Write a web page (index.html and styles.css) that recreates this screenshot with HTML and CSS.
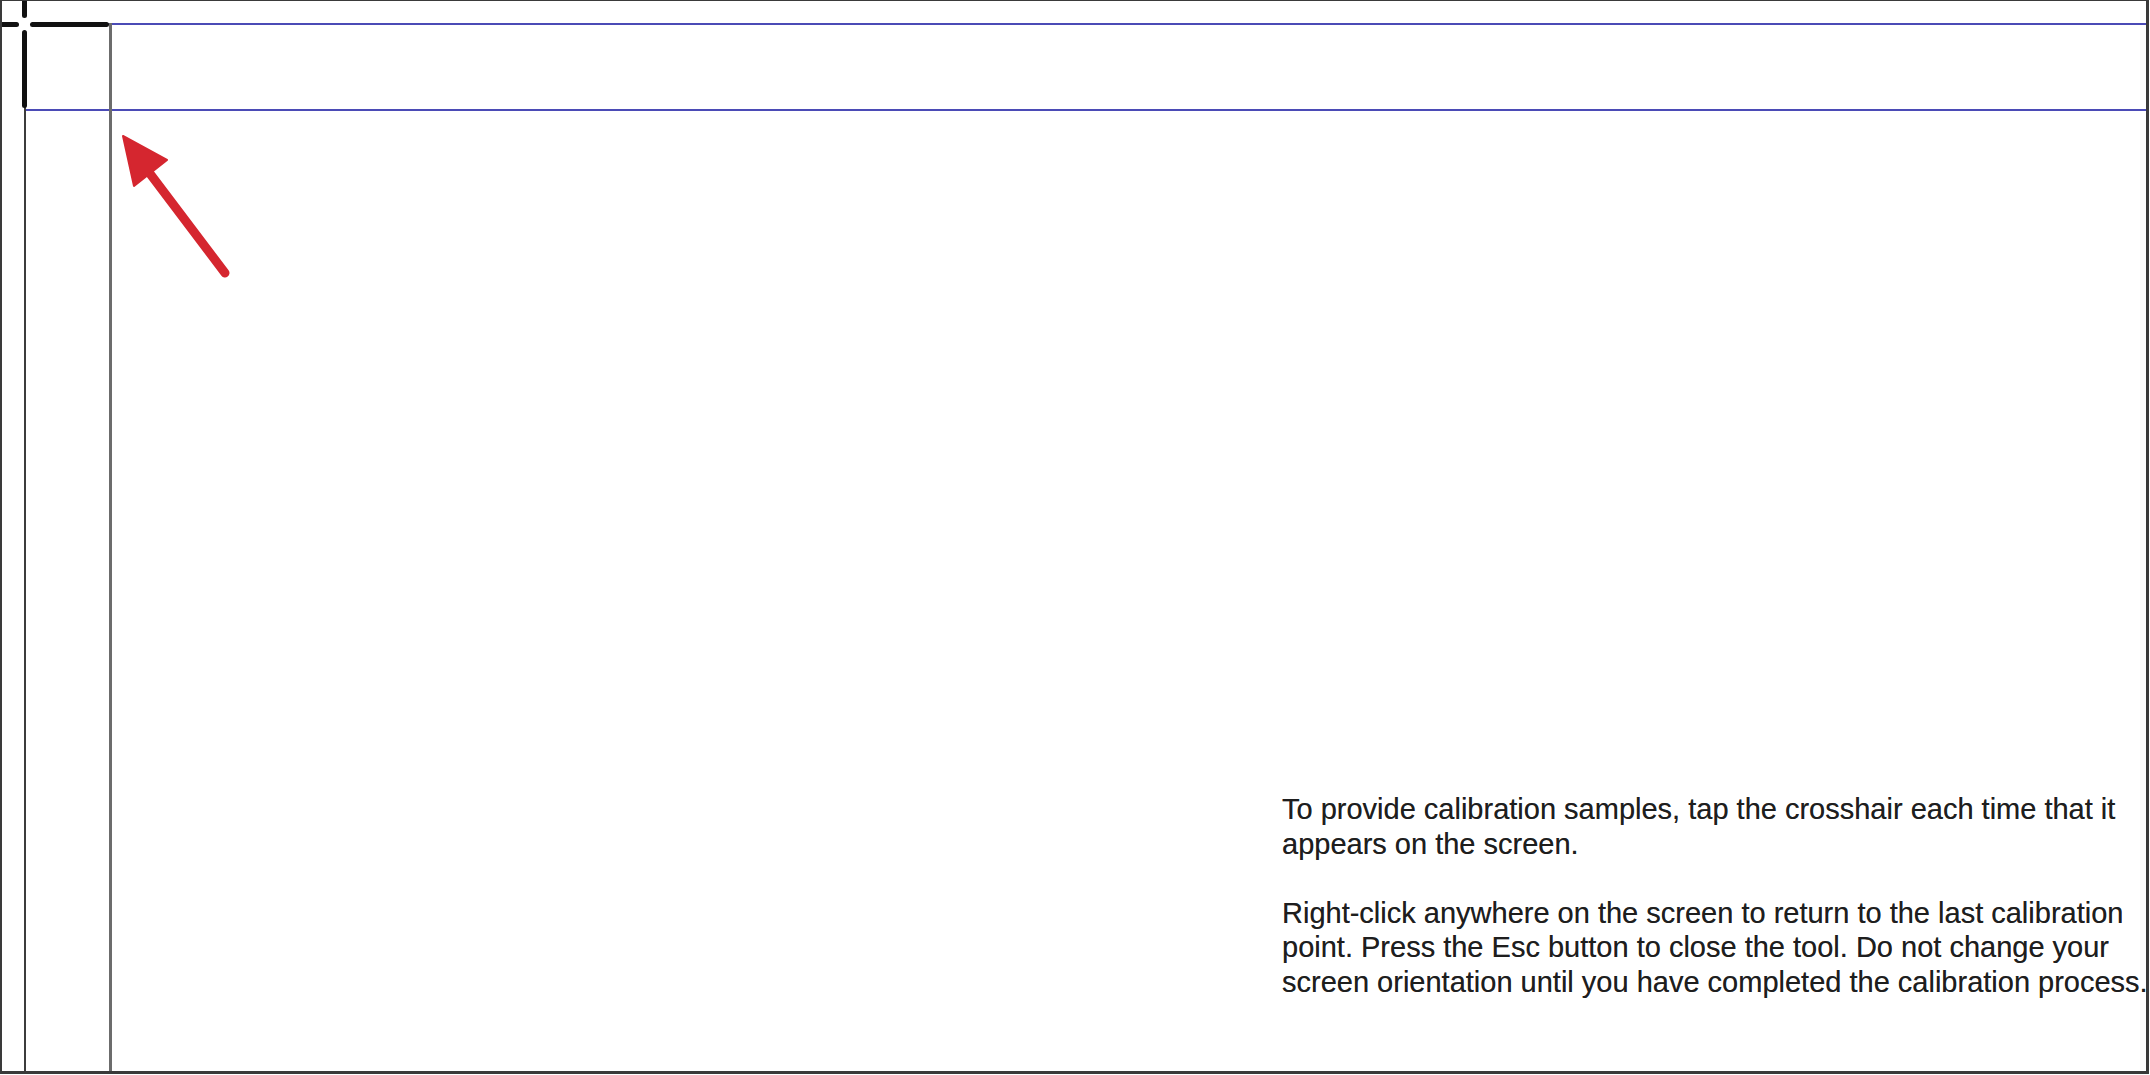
FILE: index.html
```html
<!DOCTYPE html>
<html lang="en">
<head>
<meta charset="utf-8">
<title>Tablet PC Calibration</title>
<link rel="stylesheet" href="styles.css">
</head>
<body>
<div class="screen">
  <div class="guide guide-top"></div>
  <div class="guide guide-second"></div>
  <div class="guide guide-gray"></div>
  <div class="guide guide-dark"></div>
  <div class="cross cross-h-left"></div>
  <div class="cross cross-h-right"></div>
  <div class="cross cross-v-top"></div>
  <div class="cross cross-v-bottom"></div>
  <svg class="arrow" width="120" height="160" viewBox="0 0 120 160" xmlns="http://www.w3.org/2000/svg">
    <line class="arrow-shaft" x1="36" y1="46" x2="113" y2="148"/>
    <polygon class="arrow-head" points="11,11 55,35 22,61"/>
  </svg>
  <div class="instructions">
    <p>To provide calibration samples, tap the crosshair each time that it<br>appears on the screen.</p>
    <p>Right-click anywhere on the screen to return to the last calibration<br>point. Press the Esc button to close the tool. Do not change your<br>screen orientation until you have completed the calibration process.</p>
  </div>
</div>
</body>
</html>
```

FILE: styles.css
```css
html, body {
  margin: 0;
  padding: 0;
  background: #ffffff;
}

body {
  width: 2150px;
  height: 1075px;
  overflow: hidden;
}

.screen {
  position: relative;
  box-sizing: border-box;
  width: 2149px;
  height: 1074px;
  border-style: solid;
  border-color: #3a3a3a;
  border-width: 1px 3px 3px 2px;
  background: #ffffff;
  display: flex;
  flex-direction: column;
  overflow: hidden;
}

/* calibration canvas drawing: positions are the content itself */
.guide {
  position: absolute;
}

.guide-top {
  left: 106px;
  right: 0;
  top: 22px;
  height: 2px;
  background: #4b4bb6;
}

.guide-second {
  left: 22px;
  right: 0;
  top: 108px;
  height: 2px;
  background: #4b4bb6;
}

.guide-gray {
  left: 107px;
  top: 22px;
  bottom: 0;
  width: 3px;
  background: #6c6c6c;
}

.guide-dark {
  left: 22px;
  top: 105px;
  bottom: 0;
  width: 2px;
  background: #3c3c3c;
}

.cross {
  position: absolute;
  background: #111111;
  border-radius: 3px;
}

.cross-h-left {
  left: -4px;
  top: 21px;
  width: 21px;
  height: 5px;
}

.cross-h-right {
  left: 28px;
  top: 21px;
  width: 79px;
  height: 5px;
}

.cross-v-top {
  left: 20px;
  top: -4px;
  width: 5px;
  height: 21px;
}

.cross-v-bottom {
  left: 20px;
  top: 29px;
  width: 5px;
  height: 78px;
}

.arrow {
  position: absolute;
  left: 110px;
  top: 124px;
}

.arrow-shaft {
  stroke: #d5262f;
  stroke-width: 9;
  stroke-linecap: round;
}

.arrow-head {
  fill: #d5262f;
  stroke: #d5262f;
  stroke-width: 2;
  stroke-linejoin: round;
}

.instructions {
  margin-top: 791px;
  margin-left: 1280px;
  font-family: "Liberation Sans", Arial, sans-serif;
  font-size: 29px;
  line-height: 34.5px;
  color: #1e1e1e;
  white-space: nowrap;
  text-shadow: 0 0 0.6px rgba(30, 30, 30, 0.6);
}

.instructions p {
  margin: 0 0 34.5px 0;
}

.instructions p:last-child {
  margin-bottom: 0;
}
```
